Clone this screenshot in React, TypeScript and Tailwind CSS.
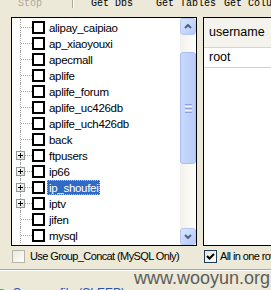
import React from 'react'

const dbs = [
    { name: 'alipay_caipiao' },
    { name: 'ap_xiaoyouxi' },
    { name: 'apecmall' },
    { name: 'aplife' },
    { name: 'aplife_forum' },
    { name: 'aplife_uc426db' },
    { name: 'aplife_uch426db' },
    { name: 'back' },
    { name: 'ftpusers', plus: true },
    { name: 'ip66', plus: true },
    { name: 'ip_shoufei', plus: true, selected: true },
    { name: 'iptv', plus: true },
    { name: 'jifen' },
    { name: 'mysql' },
]

function PlusBox() {
    return (
        <div className="absolute left-[4px] top-[4px] w-[9px] h-[9px] border border-[#919b9c] bg-gradient-to-br from-white to-[#dedbd0] flex items-center justify-center">
            <svg width="5" height="5" viewBox="0 0 5 5">
                <path d="M0 2.5H5M2.5 0V5" stroke="#000" strokeWidth="1" />
            </svg>
        </div>
    )
}

function TreeRow({ name, plus, selected }: { name: string; plus?: boolean; selected?: boolean }) {
    return (
        <div className="flex items-center h-[16px]">
            <div className="relative w-[20px] h-full shrink-0">
                <div className="absolute left-[8px] top-0 bottom-0 border-l border-dotted border-[#a0a0a0]" />
                <div className="absolute left-[9px] top-[8px] w-[11px] border-t border-dotted border-[#a0a0a0]" />
                {plus && <PlusBox />}
            </div>
            <div className="w-[13px] h-[13px] border-2 border-black bg-white shrink-0" />
            <span
                className={
                    selected
                        ? 'ml-[2px] px-[1px] h-[15px] leading-[14px] whitespace-nowrap bg-[#316ac5] text-white border border-dotted border-[#a9c1ec]'
                        : 'ml-[2px] px-[1px] h-[15px] leading-[15px] whitespace-nowrap border border-transparent'
                }
            >
                {name}
            </span>
        </div>
    )
}

function ScrollButton({ down }: { down?: boolean }) {
    return (
        <div className="h-[17px] shrink-0 rounded-[3px] border border-[#b6c9f5] bg-gradient-to-br from-[#dbe6fe] to-[#b4c8f7] flex items-center justify-center">
            <svg width="8" height="5" viewBox="0 0 8 5">
                <path d={down ? 'M1 1L4 4L7 1' : 'M1 4L4 1L7 4'} stroke="#4d6185" strokeWidth="2" fill="none" />
            </svg>
        </div>
    )
}

export default function App() {
    return (
        <div className="w-[271px] h-[290px] overflow-hidden bg-[#ece9d8] text-black font-['Liberation_Sans',Arial,sans-serif]">
            {/* toolbar, mostly scrolled out of view */}
            <div className="h-[10px] overflow-hidden flex items-start font-['Liberation_Mono',monospace] text-[10px] leading-[10px] whitespace-nowrap">
                <span className="ml-[18px] -mt-[1px] text-[#aca899]">Stop</span>
                <div className="ml-[30px] w-[2px] h-[8px] border-l border-[#aca899] border-r border-r-white" />
                <span className="ml-[17px] -mt-[1px]">Get Dbs</span>
                <span className="ml-[23px] -mt-[1px]">Get Tables</span>
                <span className="ml-[8px] -mt-[1px]">Get Columns</span>
            </div>

            <div className="flex mt-[7px] ml-[11px]">
                <div className="w-[186px] h-[229px] border border-black bg-white flex shrink-0">
                    <div className="flex-1 pt-[1px] overflow-hidden text-[11.5px] tracking-[-0.3px]">
                        {dbs.map((d) => (
                            <TreeRow key={d.name} {...d} />
                        ))}
                    </div>
                    <div className="w-[16px] flex flex-col bg-gradient-to-r from-[#f3f1ec] to-[#fefefb]">
                        <ScrollButton />
                        <div className="mt-[17px] h-[112px] rounded-[3px] border border-[#a9bff3] bg-gradient-to-r from-[#c9d8fd] to-[#b8ccf9] flex flex-col items-center justify-center gap-[1px]">
                            <div className="w-[7px] h-[1px] bg-[#8da4e2]" />
                            <div className="w-[7px] h-[1px] bg-[#eef3ff]" />
                            <div className="w-[7px] h-[1px] bg-[#8da4e2]" />
                            <div className="w-[7px] h-[1px] bg-[#eef3ff]" />
                            <div className="w-[7px] h-[1px] bg-[#8da4e2]" />
                        </div>
                        <div className="flex-1" />
                        <ScrollButton down />
                    </div>
                </div>

                <div className="ml-[6px] w-[80px] h-[229px] border border-black bg-white shrink-0 text-[12.5px]">
                    <div className="h-[30px] flex items-center pl-[5px] bg-[#f4f3ee] border-b border-[#cfd6e2]">username</div>
                    <div className="h-[20px] flex items-center pl-[5px] border-b border-[#c6d2e2]">root</div>
                </div>
            </div>

            <div className="mt-[1px] h-[19px] flex items-center text-[11px] tracking-[-0.6px] whitespace-nowrap">
                <div className="w-[204px] flex items-center shrink-0">
                    <div className="ml-[12px] w-[13px] h-[13px] border border-[#b7b4a6] bg-gradient-to-br from-[#e9e8e0] to-white shrink-0" />
                    <span className="ml-[5px]">Use Group_Concat (MySQL Only)</span>
                </div>
                <div className="w-[13px] h-[13px] border border-[#1c3a5a] bg-gradient-to-br from-[#e6e5dd] to-white flex items-center justify-center shrink-0">
                    <svg width="9" height="9" viewBox="0 0 9 9">
                        <path d="M1 4L3.5 6.5L8 2" stroke="#000" strokeWidth="2" fill="none" />
                    </svg>
                </div>
                <span className="ml-[3px]">All in one row</span>
            </div>

            <div className="mt-[3px] h-[2px] border-t border-[#aca899] border-b border-b-white" />

            <div className="-mt-[2px] h-[14px] leading-[18px] text-[18px] text-right pr-[1px] text-[#5c5c5c] whitespace-nowrap">
                www.wooyun.org
            </div>

            <div className="mt-[4px] flex items-center text-[12px] leading-[12px] whitespace-nowrap">
                <div className="w-[5px] h-[8px] bg-[#5aa55a] rounded-r-[3px]" />
                <span className="ml-[8px] text-[#2852b8]">Save as file  (SLEEP)</span>
            </div>
        </div>
    )
}
